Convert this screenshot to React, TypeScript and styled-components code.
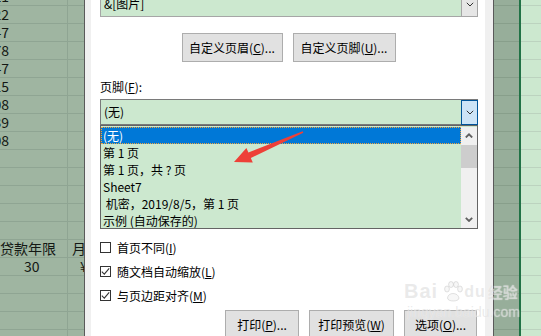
import React from "react";
import styled, { createGlobalStyle } from "styled-components";

const GlobalStyle = createGlobalStyle`
  html, body {
    margin: 0;
    padding: 0;
    width: 541px;
    height: 336px;
    overflow: hidden;
  }
  body {
    font-family: "Noto Sans CJK SC", "Noto Sans", sans-serif;
    color: #000;
  }
  * {
    box-sizing: border-box;
  }
`;

const Screen = styled.div`
  position: relative;
  display: flex;
  width: 541px;
  height: 336px;
  overflow: hidden;
`;

// --- Sheet behind the dialog (dimmed) ---

const Sheet = styled.div`
  width: 84px;
  flex-shrink: 0;
  overflow: hidden;
  background: #9fb5a1;
`;

const SheetRows = styled.div`
  margin-top: -12px;
`;

const SheetRow = styled.div`
  display: grid;
  grid-template-columns: 68px 1fr;
  height: 18px;
  border-bottom: 1px solid #8fa593;
  font-size: 14px;
  line-height: 17px;
  color: #141814;
  white-space: nowrap;
`;

const NumCell = styled.div`
  display: flex;
  justify-content: flex-end;
  padding-right: 58px;
  border-right: 1px solid #8fa593;
`;

const TextCell = styled.div<{ $indent?: number }>`
  padding-left: ${(p) => p.$indent ?? 0}px;
  border-right: 1px solid #8fa593;
`;

const NextCell = styled.div<{ $indent?: number }>`
  padding-left: ${(p) => p.$indent ?? 0}px;
  overflow: hidden;
`;

const gridLines = (line: string) => `
  background-image: linear-gradient(to bottom, transparent 17px, ${line} 17px);
  background-size: 100% 18px;
  background-position: 0 6px;
`;

const SideSheet = styled.div`
  display: flex;
  width: 47px;
  flex-shrink: 0;
`;

const DimStrip = styled.div`
  width: 25px;
  background-color: #97ae9a;
  ${gridLines("#889f8b")}
`;

const SelectionEdge = styled.div`
  width: 2px;
  background: #217346;
`;

const LightStrip = styled.div`
  flex: 1;
  background-color: #cce8cf;
  ${gridLines("#bcd3bf")}
`;

// --- Dialog ---

const Dialog = styled.div`
  width: 410px;
  flex-shrink: 0;
  display: flex;
  border-left: 1px solid #5a5a5a;
  border-right: 1px solid #5a5a5a;
  background: #f0f0f0;
  padding: 0 8px 0 6px;
`;

const Panel = styled.div`
  flex: 1;
  display: flex;
  flex-direction: column;
  background: #fff;
  padding: 0 7px 0 9px;
  font-size: 12px;

  & > * {
    flex-shrink: 0;
  }
`;

const Key = styled.span`
  text-decoration: underline;
  text-underline-offset: 1px;
`;

const Combo = styled.div<{ $focused?: boolean; $top?: number }>`
  display: flex;
  height: 26px;
  margin-top: ${(p) => p.$top ?? 0}px;
  border: 1px solid ${(p) => (p.$focused ? "#7a7a7a" : "#a6a6a6")};
  background: #cce8cf;
`;

const ComboText = styled.div`
  flex: 1;
  padding-left: 3px;
  line-height: 24px;
  white-space: nowrap;
`;

const ComboButton = styled.div<{ $focused?: boolean }>`
  width: 17px;
  display: flex;
  align-items: center;
  justify-content: center;
  margin: 0 -1px -1px 0;
  background: ${(p) => (p.$focused ? "#cce4f7" : "#e6e6e6")};
  border: 1px solid ${(p) => (p.$focused ? "#005499" : "#a6a6a6")};
  border-top: ${(p) => (p.$focused ? "1px solid #005499" : "none")};
`;

const ButtonRow = styled.div<{ $justify: string; $top: number }>`
  display: flex;
  gap: 10px;
  justify-content: ${(p) => p.$justify};
  margin-top: ${(p) => p.$top}px;
  padding-right: 1px;
`;

const PushButton = styled.div<{ $w: number }>`
  width: ${(p) => p.$w}px;
  height: 29px;
  display: flex;
  align-items: center;
  justify-content: center;
  background: #e1e1e1;
  border: 1px solid #adadad;
  white-space: nowrap;
`;

const FieldLabel = styled.div`
  margin-top: 17px;
  margin-bottom: 4px;
  line-height: 16px;
`;

const ListBox = styled.div`
  display: flex;
  height: 104px;
  border: 1px solid #646464;
  padding-top: 1px;
  background: #cce8cf;
`;

const ListRows = styled.div`
  flex: 1;
  overflow: hidden;
`;

const ListItem = styled.div<{ $selected?: boolean }>`
  height: 17px;
  line-height: 17px;
  padding-left: 2px;
  white-space: pre;
  color: ${(p) => (p.$selected ? "#fff" : "#000")};
  background: ${(p) => (p.$selected ? "#0078d7" : "transparent")};
  outline: ${(p) => (p.$selected ? "1px dotted #f0a43c" : "none")};
  outline-offset: -1px;
`;

const ScrollBar = styled.div`
  width: 16px;
  display: flex;
  flex-direction: column;
  background: #f0f0f0;
`;

const ScrollArrow = styled.div`
  height: 17px;
  display: flex;
  align-items: center;
  justify-content: center;
`;

const ScrollThumb = styled.div`
  height: 23px;
  margin-top: 1px;
  background: #cdcdcd;
`;

const ScrollTrack = styled.div`
  flex: 1;
`;

const CheckList = styled.div`
  display: flex;
  flex-direction: column;
  margin-top: 6px;
`;

const CheckRow = styled.div`
  height: 24px;
  display: flex;
  align-items: center;
  gap: 6px;
  white-space: nowrap;
`;

const CheckBox = styled.div`
  width: 11px;
  height: 11px;
  display: flex;
  align-items: center;
  justify-content: center;
  border: 1px solid #333;
  background: #fff;
`;

// --- Overlays ---

const Overlay = styled.svg`
  position: absolute;
  left: 0;
  top: 0;
  pointer-events: none;
`;

const Watermark = styled.div`
  position: absolute;
  left: 404px;
  top: 280px;
  display: flex;
  flex-direction: column;
  gap: 1px;
  color: rgba(205, 205, 205, 0.42);
  text-shadow: 0 0 1px rgba(255, 255, 255, 0.7);
  pointer-events: none;
`;

const MarkLine = styled.div`
  display: flex;
  align-items: center;
  white-space: nowrap;
`;

const MarkLatin = styled.span<{ $size: number }>`
  font-family: "Liberation Sans", Arial, sans-serif;
  font-weight: 700;
  font-size: ${(p) => p.$size}px;
  letter-spacing: 1px;
`;

const MarkCjk = styled.span`
  font-family: "Noto Sans CJK SC", sans-serif;
  font-weight: 700;
  font-size: 15px;
  margin-left: 2px;
`;

const MarkUrl = styled.span`
  font-family: "Liberation Sans", Arial, sans-serif;
  font-size: 14px;
  padding-left: 3px;
`;

function Chevron({ up, thick }: { up?: boolean; thick?: boolean }) {
  const pts = up ? "0.8,4.5 4,1.3 7.2,4.5" : "0.8,0.8 4,4 7.2,0.8";
  return (
    <svg width="8" height="5" viewBox="0 0 8 5">
      <polyline
        points={pts}
        fill="none"
        stroke={thick ? "#606060" : "#333"}
        strokeWidth={thick ? 1.8 : 1}
      />
    </svg>
  );
}

function Tick() {
  return (
    <svg width="9" height="9" viewBox="0 0 9 9">
      <polyline points="0.8,4.6 3.3,7.1 8.2,1.4" fill="none" stroke="#333" strokeWidth="1.1" />
    </svg>
  );
}

function Paw() {
  return (
    <svg width="20" height="21" viewBox="0 0 20 21" style={{ margin: "0 1px 0 5px" }}>
      <g fill="rgba(240,240,240,0.5)" stroke="rgba(185,185,185,0.4)" strokeWidth="1">
        <ellipse cx="4" cy="8" rx="2.4" ry="3" />
        <ellipse cx="8" cy="3.5" rx="2.4" ry="3" />
        <ellipse cx="13" cy="3.5" rx="2.4" ry="3" />
        <ellipse cx="17" cy="8" rx="2.4" ry="3" />
        <path d="M4.5 17 C5 11 15 11 16 17 C16 21 4.5 21 4.5 17 Z" />
      </g>
    </svg>
  );
}

type SheetLine = { a?: string; num?: boolean; aIndent?: number; b?: string; bIndent?: number };

const sheetLines: SheetLine[] = [
  { a: "121", num: true },
  { a: "322", num: true },
  { a: "147", num: true },
  { a: "278", num: true },
  { a: "347", num: true },
  { a: "215", num: true },
  { a: "108", num: true },
  { a: "539", num: true },
  { a: "608", num: true },
  {},
  {},
  {},
  {},
  {},
  { a: "贷款年限", b: "月", bIndent: 4 },
  { a: "30", aIndent: 24, b: "¥", bIndent: 12 },
  {},
  {},
  {},
  {},
];

const footerOptions = [
  "(无)",
  "第 1 页",
  "第 1 页，共 ? 页",
  "Sheet7",
  " 机密，2019/8/5，第 1 页",
  "示例 (自动保存的)",
];

export default function App() {
  return (
    <>
      <GlobalStyle />
      <Screen>
        <Sheet>
          <SheetRows>
            {sheetLines.map((row, i) => (
              <SheetRow key={i}>
                {row.num ? (
                  <NumCell>{row.a}</NumCell>
                ) : (
                  <TextCell $indent={row.aIndent}>{row.a}</TextCell>
                )}
                <NextCell $indent={row.bIndent}>{row.b}</NextCell>
              </SheetRow>
            ))}
          </SheetRows>
        </Sheet>

        <Dialog>
          <Panel>
            <Combo $top={-9}>
              <ComboText>&amp;[图片]</ComboText>
              <ComboButton>
                <Chevron />
              </ComboButton>
            </Combo>

            <ButtonRow $justify="center" $top={16}>
              <PushButton $w={101}>
                自定义页眉(<Key>C</Key>)...
              </PushButton>
              <PushButton $w={103}>
                自定义页脚(<Key>U</Key>)...
              </PushButton>
            </ButtonRow>

            <FieldLabel>
              页脚(<Key>F</Key>):
            </FieldLabel>
            <Combo $focused>
              <ComboText>(无)</ComboText>
              <ComboButton $focused>
                <Chevron />
              </ComboButton>
            </Combo>
            <ListBox>
              <ListRows>
                {footerOptions.map((opt, i) => (
                  <ListItem key={opt} $selected={i === 0}>
                    {opt}
                  </ListItem>
                ))}
              </ListRows>
              <ScrollBar>
                <ScrollArrow>
                  <Chevron up thick />
                </ScrollArrow>
                <ScrollThumb />
                <ScrollTrack />
                <ScrollArrow>
                  <Chevron thick />
                </ScrollArrow>
              </ScrollBar>
            </ListBox>

            <CheckList>
              <CheckRow>
                <CheckBox />
                <span>
                  首页不同(<Key>I</Key>)
                </span>
              </CheckRow>
              <CheckRow>
                <CheckBox>
                  <Tick />
                </CheckBox>
                <span>
                  随文档自动缩放(<Key>L</Key>)
                </span>
              </CheckRow>
              <CheckRow>
                <CheckBox>
                  <Tick />
                </CheckBox>
                <span>
                  与页边距对齐(<Key>M</Key>)
                </span>
              </CheckRow>
            </CheckList>

            <ButtonRow $justify="flex-end" $top={3}>
              <PushButton $w={74}>
                打印(<Key>P</Key>)...
              </PushButton>
              <PushButton $w={85}>
                打印预览(<Key>W</Key>)
              </PushButton>
              <PushButton $w={73}>
                选项(<Key>O</Key>)...
              </PushButton>
            </ButtonRow>
          </Panel>
        </Dialog>

        <SideSheet>
          <DimStrip />
          <SelectionEdge />
          <LightStrip />
        </SideSheet>

        <Overlay width="541" height="336" viewBox="0 0 541 336">
          <polygon
            points="234,162 252.8,162.5 250.8,158 303.3,132.7 302.7,131.3 248.4,152.5 246.4,147.9"
            fill="#ee4038"
          />
        </Overlay>

        <Watermark>
          <MarkLine>
            <MarkLatin $size={20}>Bai</MarkLatin>
            <Paw />
            <MarkLatin $size={16}>du</MarkLatin>
            <MarkCjk>经验</MarkCjk>
          </MarkLine>
          <MarkLine>
            <MarkUrl>jingyan.baidu.com</MarkUrl>
          </MarkLine>
        </Watermark>
      </Screen>
    </>
  );
}
